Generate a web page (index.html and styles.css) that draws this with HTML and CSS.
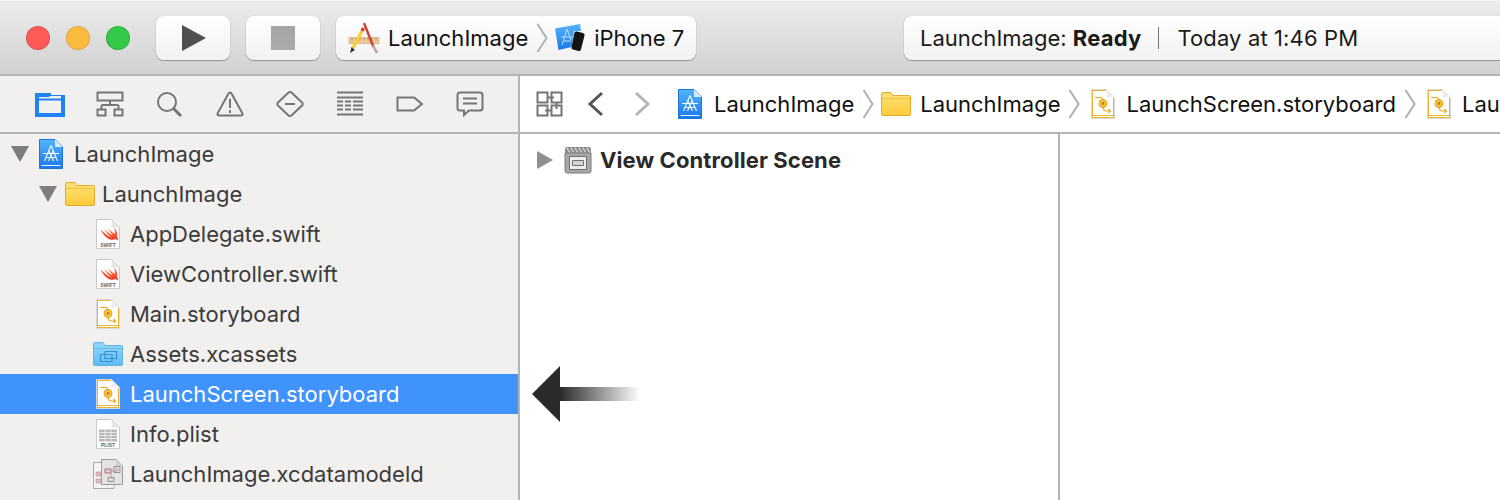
FILE: index.html
```html
<!DOCTYPE html>
<html lang="en">
<head>
<meta charset="utf-8">
<title>LaunchImage</title>
<link rel="stylesheet" href="styles.css">
</head>
<body>
<svg class="defs" width="0" height="0" aria-hidden="true">
  <defs>
    <linearGradient id="blueDoc" x1="0" y1="0" x2="0" y2="1"><stop offset="0" stop-color="#55b4fb"/><stop offset="1" stop-color="#1a78ea"/></linearGradient>
    <linearGradient id="yellowFolder" x1="0" y1="0" x2="0" y2="1"><stop offset="0" stop-color="#ffe27a"/><stop offset="1" stop-color="#fdcb3c"/></linearGradient>
    <linearGradient id="blueFolder" x1="0" y1="0" x2="0" y2="1"><stop offset="0" stop-color="#93d7fb"/><stop offset="1" stop-color="#5fbdf5"/></linearGradient>
    <linearGradient id="swiftGrad" x1="0" y1="0" x2="0" y2="1"><stop offset="0" stop-color="#f8853a"/><stop offset="1" stop-color="#f2332c"/></linearGradient>
    <linearGradient id="arrowTail" x1="0" y1="0" x2="1" y2="0"><stop offset="0" stop-color="#2a2a2a"/><stop offset="1" stop-color="#2a2a2a" stop-opacity="0"/></linearGradient>
    <symbol id="i-project" viewBox="0 0 24 30">
      <path d="M.5 .5H16L23.500 8V29.500H.5Z" fill="url(#blueDoc)" stroke="#1c74dd"/>
      <path d="M16 .5V8H23.500Z" fill="#d5ebfd"/>
      <path d="M2.500 26.500H21.500" stroke="#e4f3fe" stroke-width="1"/>
      <path d="M12 6.500L5.500 22M12 6.500L18.500 22M9.500 11L14.500 22M14.500 11L9.500 22M4 14.500H20M6.500 18.500H17.500" stroke="#eef8ff" stroke-width="1.100" fill="none"/>
    </symbol>
    <symbol id="i-folder" viewBox="0 0 30 24">
      <path d="M.5 4V22Q.5 23.500 2 23.500H28Q29.500 23.500 29.500 22V5Q29.500 3.500 28 3.500H12L10 .5H2Q.5 .5 .5 2Z" fill="url(#yellowFolder)" stroke="#e2ac28"/>
      <path d="M1 6.500H29" stroke="#f4c33d" stroke-width="1"/>
    </symbol>
    <symbol id="i-assets" viewBox="0 0 30 24">
      <path d="M.5 4V22Q.5 23.500 2 23.500H28Q29.500 23.500 29.500 22V5Q29.500 3.500 28 3.500H12L10 .5H2Q.5 .5 .5 2Z" fill="url(#blueFolder)" stroke="#62b3e6"/>
      <path d="M1 6.500H29" stroke="#6cbceb" stroke-width="1"/>
      <path d="M12 9.500H23.500V16.500H12ZM7.500 12.500H19V19.500H7.500Z" fill="none" stroke="#3a8fd0" stroke-width="1.200"/>
    </symbol>
    <symbol id="i-swift" viewBox="0 0 24 30">
      <path d="M.5 .5H15.500L23.500 8.500V29.500H.5Z" fill="#fff" stroke="#c9c9c9"/>
      <path d="M15.500 .5V8.500H23.500Z" fill="#e6e6e6"/>
      <path d="M4 10C9 15 13 17.500 15.500 18.500C12 15.500 9 12 7 9.500C10.500 12.500 14 15 17 16.500C15 14 13 11.500 12 9.500C14.500 12 17 14 18.500 15C19.500 12 18.500 9.500 17.500 8C20.500 10.500 22 14.500 21 17.500C22 19 22 20.500 21.500 21.500C20.500 20 19 20 18 20.500C14 22 8 18 4 10Z" fill="url(#swiftGrad)"/>
      <text class="icon-label" x="12" y="27.500">SWIFT</text>
    </symbol>
    <symbol id="i-board" viewBox="0 0 24 30">
      <path d="M.5 .5H15.500L23.500 8.500V29.500H.5Z" fill="#fff" stroke="#d9d9d9"/>
      <path d="M1 1H15V2H2V28H22V9H23V29H1Z" fill="#ecb435"/>
      <path d="M15.500 .5V8.500H23.500Z" fill="#eee"/>
      <path d="M4 8.500H9Q12 8.500 12 11.500V18Q12 22 16 22H19M17.500 20L19.500 22L17.500 24" fill="none" stroke="#eaa921" stroke-width="1.200"/>
      <circle cx="12" cy="14.500" r="4" fill="#f8c53e" stroke="#e5a31f"/>
      <circle cx="12" cy="14.500" r="1.400" fill="#b9801b"/>
      <path d="M2 26.500H22" stroke="#ecb435" stroke-width="1"/>
    </symbol>
    <symbol id="i-plist" viewBox="0 0 24 30">
      <path d="M.5 .5H15.500L23.500 8.500V29.500H.5Z" fill="#fff" stroke="#c9c9c9"/>
      <path d="M15.500 .5V8.500H23.500Z" fill="#e6e6e6"/>
      <path d="M3 10.500H21V22.500H3Z" fill="#b9b9b9"/>
      <path d="M3 13.500H21M3 16.500H21M3 19.500H21M9 10.500V22.500M15 10.500V22.500" stroke="#f2f2f2" stroke-width=".8"/>
      <text class="icon-label" x="12" y="28">PLIST</text>
    </symbol>
    <symbol id="i-model" viewBox="0 0 30 30">
      <path d="M.5 3.500H14L21 9V29.500H.5Z" fill="#f4f4f4" stroke="#a9a9a9"/>
      <path d="M3 13H8V17H3ZM3 20H8V24H3Z" fill="#e9b9b9" stroke="#b78f8f" stroke-width=".6"/>
      <path d="M8.500 .5H23L29.500 7V25.500H8.500Z" fill="#e3e3e3" stroke="#9b9b9b"/>
      <path d="M23 .5V7H29.500Z" fill="#cfcfcf"/>
      <path d="M12 10H18V14H12Z" fill="#cdd0da" stroke="#c0606a" stroke-width=".9"/>
      <path d="M21 7.500H27V13.500H21ZM15 18.500H21V22.500H15Z" fill="#ddd" stroke="#8b8b8b" stroke-width=".9"/>
      <path d="M18 12H24V9M18 18.500V14" fill="none" stroke="#b08088" stroke-width=".8"/>
    </symbol>
    <symbol id="i-scene" viewBox="0 0 28 28">
      <path d="M1 3Q1 1 3 1H25Q27 1 27 3V8H1Z" fill="#8e8e8e"/>
      <path d="M3 2L6 7M7 2L10 7M11 2L14 7M15 2L18 7M19 2L22 7M23 2L26 7" stroke="#dedede" stroke-width="1.200"/>
      <path d="M1 7H27V25Q27 27 25 27H3Q1 27 1 25Z" fill="#a7a7a7" stroke="#7d7d7d"/>
      <path d="M5.500 10.500H22.500V23.500H5.500Z" fill="#ededed" stroke="#6f6f6f"/>
      <path d="M8.500 14.500H19.500V19.500H8.500Z" fill="#d5d5d5" stroke="#6f6f6f"/>
    </symbol>
    <symbol id="i-target" viewBox="0 0 32 32">
      <path d="M1 15.500H31V21.500H1Z" fill="#ecc999" stroke="#c99f72" stroke-width=".6"/>
      <path d="M4 16V18.500M8 16V18.500M12 16V18.500M16 16V18.500M20 16V18.500M24 16V18.500M28 16V18.500" stroke="#a77b4f" stroke-width=".8"/>
      <path d="M16 1L25.500 25" stroke="#c9433a" stroke-width="2.400"/>
      <path d="M25 23.500L29 31" stroke="#b8a79b" stroke-width="2.600"/>
      <path d="M14 9L5 26" stroke="#f6cf35" stroke-width="3.400"/>
      <path d="M15.500 6L14 9" stroke="#d33c30" stroke-width="3.400"/>
      <path d="M3.500 25L2 31L7 28Z" fill="#3a3328"/>
    </symbol>
    <symbol id="i-device" viewBox="0 0 30 28">
      <path d="M0 4.500L25 0L26 7L19 7L16.500 23L3.500 26Z" fill="url(#blueDoc)"/>
      <path d="M12 5L7 21M12 5L16 16M6 13H18M8 17H16" stroke="#b7defb" stroke-width="1" fill="none"/>
      <path d="M19.500 8.500Q20 7 22 7.500L28 9Q30 9.500 29.500 11.500L26 25.500Q25.500 27.500 23.500 27L18 25.500Q16 25 16.500 23Z" fill="#141414"/>
    </symbol>
    <symbol id="t-folder" viewBox="0 0 30 26">
      <path d="M0 2H16V4H30V26H0Z" fill="#1f82f6"/>
      <path d="M4 6H14L15 5H26V9H4ZM4 9H26V22H4Z" fill="#f1f0ef"/>
      <path d="M4 7.500H26V9.500H4Z" fill="#1f82f6"/>
    </symbol>
  </defs>
</svg>

<div class="window">
  <header class="toolbar">
    <div class="lights">
      <span class="light red"></span>
      <span class="light yellow"></span>
      <span class="light green"></span>
    </div>
    <button class="tool-btn play-btn"><span class="play-glyph"></span></button>
    <button class="tool-btn stop-btn"><span class="stop-glyph"></span></button>
    <div class="pill scheme">
      <svg class="ic-target"><use href="#i-target"/></svg>
      <span class="scheme-name">LaunchImage</span>
      <svg class="crumb-sep" viewBox="0 0 12 30"><path d="M1.500 1L10.500 15L1.500 29" /></svg>
      <svg class="ic-device"><use href="#i-device"/></svg>
      <span class="scheme-device">iPhone 7</span>
    </div>
    <div class="pill status">
      <span>LaunchImage: <b>Ready</b></span>
      <span class="status-sep"></span>
      <span class="status-time">Today at 1:46 PM</span>
    </div>
  </header>

  <div class="workspace">
    <aside class="sidebar">
      <nav class="nav-tabs">
        <span class="tab"><svg class="t-ic-folder"><use href="#t-folder"/></svg></span>
        <span class="tab"><svg class="t-ic" viewBox="0 0 28 26"><path d="M1.500 1.500H26.500V9.500H1.500ZM14 9.500V14M5.500 14H22.500M5.500 14V18M22.500 14V18M1.500 18.500H9.500V24.500H1.500ZM18.500 18.500H26.500V24.500H18.500Z"/></svg></span>
        <span class="tab"><svg class="t-ic" viewBox="0 0 28 26"><circle cx="11" cy="11" r="9"/><path class="thick" d="M17.500 17.500L25 25"/></svg></span>
        <span class="tab"><svg class="t-ic" viewBox="0 0 28 26"><path d="M14 1.500Q15 1.500 15.500 2.500L26.500 22.500Q27 24.500 25 24.500H3Q1 24.500 1.500 22.500L12.500 2.500Q13 1.500 14 1.500ZM14 8V17M14 19V22"/></svg></span>
        <span class="tab"><svg class="t-ic" viewBox="0 0 28 26"><path d="M12.500 1.500Q14 .5 15.500 1.500L26 11.500Q27.500 13 26 14.500L15.500 24.500Q14 25.500 12.500 24.500L2 14.500Q.5 13 2 11.500ZM9 13H19"/></svg></span>
        <span class="tab"><svg class="t-ic" viewBox="0 0 28 26"><path d="M1 1.500H27M1 6.500H27M1 10.500H7M9 10.500H15M17 10.500H27M1 14.500H7M9 14.500H15M17 14.500H27M1 18.500H7M9 18.500H15M17 18.500H27M1 23.500H27"/></svg></span>
        <span class="tab"><svg class="t-ic" viewBox="0 0 28 26"><path d="M1.500 6.500H18L26 13L18 19.500H1.500Z"/></svg></span>
        <span class="tab"><svg class="t-ic" viewBox="0 0 28 26"><path d="M4 1.500H24Q26.500 1.500 26.500 4V17Q26.500 19.500 24 19.500H13L8 24V19.500H4Q1.500 19.500 1.500 17V4Q1.500 1.500 4 1.500ZM7 7.500H21M7 12.500H21"/></svg></span>
      </nav>
      <ul class="tree">
        <li class="row depth-0"><span class="tri open"></span><svg class="ic-doc"><use href="#i-project"/></svg><span class="label">LaunchImage</span></li>
        <li class="row depth-1"><span class="tri open"></span><svg class="ic-folder"><use href="#i-folder"/></svg><span class="label">LaunchImage</span></li>
        <li class="row depth-2"><svg class="ic-doc"><use href="#i-swift"/></svg><span class="label">AppDelegate.swift</span></li>
        <li class="row depth-2"><svg class="ic-doc"><use href="#i-swift"/></svg><span class="label">ViewController.swift</span></li>
        <li class="row depth-2"><svg class="ic-doc"><use href="#i-board"/></svg><span class="label">Main.storyboard</span></li>
        <li class="row depth-2 wide"><svg class="ic-folder"><use href="#i-assets"/></svg><span class="label">Assets.xcassets</span></li>
        <li class="row depth-2 selected"><svg class="ic-doc"><use href="#i-board"/></svg><span class="label">LaunchScreen.storyboard</span></li>
        <li class="row depth-2"><svg class="ic-doc"><use href="#i-plist"/></svg><span class="label">Info.plist</span></li>
        <li class="row depth-2 wide"><svg class="ic-model"><use href="#i-model"/></svg><span class="label">LaunchImage.xcdatamodeld</span></li>
      </ul>
    </aside>

    <main class="editor">
      <div class="jumpbar">
        <svg class="j-grid" viewBox="0 0 27 26"><path d="M1.500 1.500H11.500V11.500H1.500ZM15.500 1.500H25.500V11.500H15.500ZM1.500 14.500H11.500V24.500H1.500ZM15.500 14.500H25.500V24.500H15.500ZM11.500 6.500H18M20.500 11.500V18M15.500 19.500H9"/></svg>
        <svg class="j-chev back" viewBox="0 0 18 26"><path d="M15 2L3 13L15 24"/></svg>
        <svg class="j-chev fwd" viewBox="0 0 18 26"><path d="M3 2L15 13L3 24"/></svg>
        <svg class="ic-doc j-first"><use href="#i-project"/></svg>
        <span class="crumb">LaunchImage</span>
        <svg class="crumb-sep" viewBox="0 0 12 30"><path d="M1.500 1L10.500 15L1.500 29"/></svg>
        <svg class="ic-folder"><use href="#i-folder"/></svg>
        <span class="crumb">LaunchImage</span>
        <svg class="crumb-sep" viewBox="0 0 12 30"><path d="M1.500 1L10.500 15L1.500 29"/></svg>
        <svg class="ic-doc"><use href="#i-board"/></svg>
        <span class="crumb">LaunchScreen.storyboard</span>
        <svg class="crumb-sep" viewBox="0 0 12 30"><path d="M1.500 1L10.500 15L1.500 29"/></svg>
        <svg class="ic-doc"><use href="#i-board"/></svg>
        <span class="crumb">LaunchScreen</span>
      </div>
      <div class="panes">
        <section class="outline">
          <div class="scene-row">
            <span class="tri closed"></span>
            <svg class="ic-scene"><use href="#i-scene"/></svg>
            <span class="scene-name">View Controller Scene</span>
          </div>
        </section>
        <section class="canvas"></section>
      </div>
      <svg class="pointer" viewBox="0 0 108 56" aria-hidden="true">
        <path d="M28 0V56L0 28Z" fill="#2a2a2a"/>
        <rect x="28" y="21" width="80" height="14" fill="url(#arrowTail)"/>
      </svg>
    </main>
  </div>
</div>
</body>
</html>
```

FILE: styles.css
```css
* { box-sizing: border-box; }

html, body {
  margin: 0;
  height: 100%;
  overflow: hidden;
  background: #fff;
}

body {
  font-family: "Inter", "Liberation Sans", sans-serif;
  font-size: 22px;
  color: #222;
}

.defs { position: absolute; }

.icon-label {
  font-family: "Liberation Sans", sans-serif;
  font-size: 5px;
  font-weight: 700;
  text-anchor: middle;
  fill: #666;
}

.window {
  width: 1500px;
  height: 500px;
  display: flex;
  flex-direction: column;
  overflow: hidden;
}

/* Toolbar */
.toolbar {
  flex: 0 0 76px;
  display: flex;
  align-items: center;
  padding: 1px 0 0 26px;
  gap: 16px;
  background: linear-gradient(#ececec, #d1d1d1);
  border-top: 1px solid #f4f4f4;
  border-bottom: 2px solid #b4b4b4;
  overflow: hidden;
}

.lights {
  flex: none;
  display: flex;
  gap: 16px;
  margin-right: 10px;
}

.light {
  width: 24px;
  height: 24px;
  border-radius: 50%;
  border: 1px solid rgba(0, 0, 0, .12);
}
.red { background: #fc5b57; }
.yellow { background: #fdbc40; }
.green { background: #33c848; }

.tool-btn, .pill {
  height: 44px;
  background: linear-gradient(#fff, #f1f1f1);
  border: 0;
  border-radius: 8px;
  box-shadow: 0 1px 1px rgba(0, 0, 0, .3), 0 0 1px rgba(0, 0, 0, .3);
}

.tool-btn {
  flex: none;
  width: 74px;
  padding: 0;
  display: flex;
  align-items: center;
  justify-content: center;
}

.play-glyph {
  width: 0;
  height: 0;
  margin-left: 1px;
  border-style: solid;
  border-width: 13px 0 13px 24px;
  border-color: transparent transparent transparent #4f4f4f;
}

.stop-glyph {
  width: 24px;
  height: 24px;
  background: linear-gradient(#a4a4a4, #aaa);
}

.pill {
  display: flex;
  align-items: center;
  flex-shrink: 0;
  white-space: nowrap;
}

.scheme {
  width: 360px;
  padding-left: 12px;
  color: #111;
}
.ic-target { flex: none; width: 32px; height: 32px; margin-right: 8px; }
.scheme .crumb-sep { margin: 0 7px 0 8px; }
.ic-device { flex: none; width: 30px; height: 28px; margin-right: 9px; }

.status {
  width: 640px;
  margin-left: 192px;
  padding-left: 16px;
  color: #1a1a1a;
}
.status b { font-weight: 700; letter-spacing: .2px; }
.status-sep {
  flex: none;
  width: 1px;
  height: 22px;
  margin: 0 18px 0 17px;
  background: #777;
}
.status-time { letter-spacing: .13px; }

/* Body */
.workspace {
  flex: 1;
  min-height: 0;
  display: flex;
}

.sidebar {
  flex: 0 0 520px;
  background: #f1f0ef;
  border-right: 2px solid #b4b4b4;
  display: flex;
  flex-direction: column;
}

.nav-tabs {
  flex: 0 0 58px;
  display: flex;
  align-items: center;
  padding: 0 0 0 20px;
  border-bottom: 2px solid #b4b4b4;
}

.tab {
  width: 60px;
  display: flex;
  justify-content: center;
}

.t-ic-folder { width: 30px; height: 26px; }

.t-ic {
  width: 28px;
  height: 26px;
  fill: none;
  stroke: #757575;
  stroke-width: 2;
}
.t-ic .thick { stroke-width: 3; }

.tree {
  list-style: none;
  margin: 0;
  padding: 0;
  color: #3b3b3b;
}

.row {
  height: 40px;
  display: flex;
  align-items: center;
}

.depth-0 { padding-left: 11px; }
.depth-1 { padding-left: 39px; }
.depth-2 { padding-left: 96px; }
.depth-2.wide { padding-left: 93px; }

.row .label { margin-left: 10px; }
.depth-0 .label { margin-left: 11px; }
.depth-1 .label { margin-left: 7px; }
.depth-2.wide .label { margin-left: 7px; }

.selected {
  background: #3f93fb;
  color: #fff;
}

.tri {
  flex: none;
  width: 0;
  height: 0;
  border-style: solid;
}
.tri.open {
  margin-right: 10px;
  border-width: 16px 9px 0;
  border-color: #7d7d7d transparent transparent;
}
.depth-1 .tri.open { margin-right: 8px; }
.tri.closed {
  border-width: 9px 0 9px 16px;
  border-color: transparent transparent transparent #8f8f8f;
}

.ic-doc { flex: none; width: 24px; height: 30px; }
.ic-folder { flex: none; width: 30px; height: 24px; }
.ic-model { flex: none; width: 30px; height: 30px; }

/* Editor */
.editor {
  flex: 1;
  min-width: 0;
  display: flex;
  flex-direction: column;
  position: relative;
}

.jumpbar {
  flex: 0 0 58px;
  display: flex;
  align-items: center;
  padding: 0 0 0 16px;
  border-bottom: 2px solid #b4b4b4;
  color: #111;
  white-space: nowrap;
  overflow: hidden;
}

.j-grid {
  flex: none;
  width: 27px;
  height: 26px;
  fill: none;
  stroke: #757575;
  stroke-width: 2;
}

.j-chev {
  flex: none;
  width: 18px;
  height: 26px;
  fill: none;
  stroke-width: 3;
}
.back { margin-left: 24px; stroke: #555; }
.fwd { margin-left: 28px; stroke: #b4b4b4; }
.j-first { margin: 0 1px 0 27px; }

.crumb { flex: none; margin-left: 11px; }
.jumpbar .ic-folder + .crumb { margin-left: 9px; }

.crumb-sep {
  flex: none;
  width: 12px;
  height: 30px;
  fill: none;
  stroke: #b0b0b0;
  stroke-width: 2;
}
.jumpbar .crumb-sep { margin: 0 11px 0 8px; }
.jumpbar .crumb-sep + .ic-folder { margin-left: -4px; }

.panes {
  flex: 1;
  min-height: 0;
  display: flex;
}

.outline {
  flex: 0 0 540px;
  border-right: 2px solid #b4b4b4;
  padding: 12px 0 0 17px;
}

.canvas { flex: 1; }

.scene-row {
  display: flex;
  align-items: center;
  height: 28px;
}
.ic-scene { flex: none; width: 28px; height: 28px; margin: 0 8px 0 11px; }
.scene-name { font-weight: 700; color: #2a2a2a; letter-spacing: .1px; }

.pointer {
  position: absolute;
  left: 12px;
  top: 290px;
  width: 108px;
  height: 56px;
}
```
